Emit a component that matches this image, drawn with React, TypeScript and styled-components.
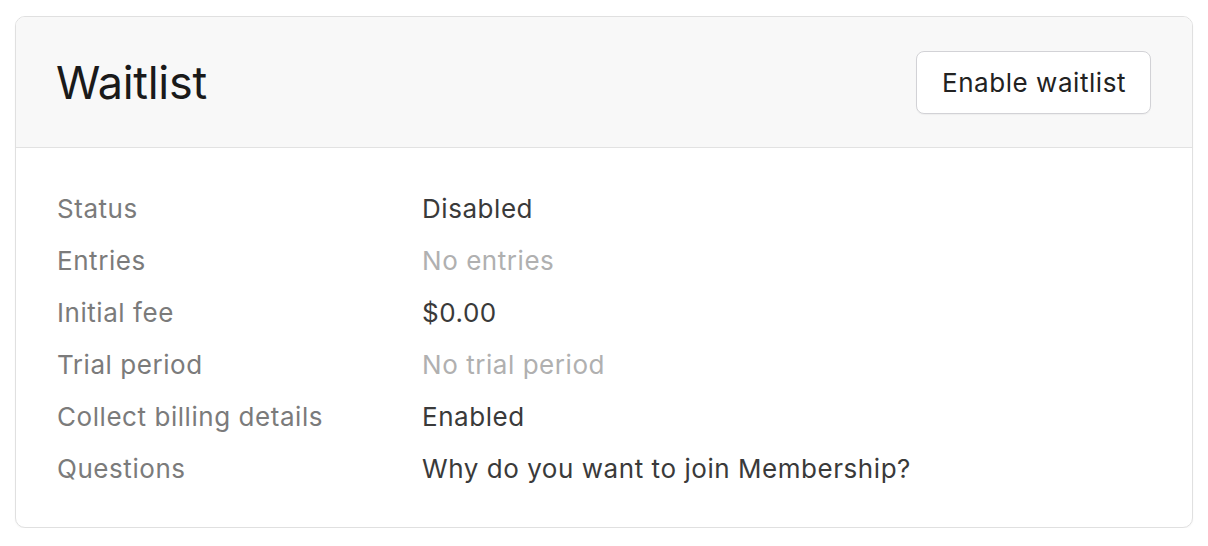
import React from "react";
import styled, { createGlobalStyle } from "styled-components";

const GlobalStyle = createGlobalStyle`
  html, body {
    margin: 0;
    padding: 0;
    background: #ffffff;
    font-family: Inter, "Noto Sans", "Liberation Sans", sans-serif;
  }
`;

const Page = styled.div`
  padding: 16px 15px 0 15px;
`;

const Card = styled.section`
  border: 1px solid #e0e0e0;
  border-radius: 10px;
  overflow: hidden;
  box-shadow: 0 1px 2px rgba(0, 0, 0, 0.04);
  background: #ffffff;
`;

const CardHeader = styled.header`
  display: flex;
  align-items: center;
  justify-content: space-between;
  height: 130px;
  padding: 0 41px 0 40px;
  background: #f8f8f8;
  border-bottom: 1px solid #e2e2e2;
`;

const Title = styled.h2`
  margin: 0;
  font-size: 45px;
  font-weight: 400;
  color: #1a1a1a;
  letter-spacing: -0.3px;
`;

const Button = styled.button`
  height: 63px;
  padding: 0 24px 0 25px;
  border: 1px solid #d2d2d6;
  border-radius: 8px;
  background: #ffffff;
  font-family: inherit;
  font-size: 26px;
  letter-spacing: 0.55px;
  color: #222222;
  box-shadow: 0 1px 1px rgba(0, 0, 0, 0.04);
  cursor: pointer;
`;

const Details = styled.dl`
  display: grid;
  grid-template-columns: 365px 1fr;
  grid-auto-rows: 52px;
  align-items: center;
  margin: 0;
  padding: 34px 41px 33px 41px;
  font-size: 26px;
  letter-spacing: 0.55px;
`;

const Label = styled.dt`
  color: #7b7b7b;
`;

const Value = styled.dd<{ muted?: boolean }>`
  margin: 0;
  color: ${(props) => (props.muted ? "#b0b0b0" : "#3a3a3a")};
`;

const rows: { label: string; value: string; muted?: boolean }[] = [
  { label: "Status", value: "Disabled" },
  { label: "Entries", value: "No entries", muted: true },
  { label: "Initial fee", value: "$0.00" },
  { label: "Trial period", value: "No trial period", muted: true },
  { label: "Collect billing details", value: "Enabled" },
  { label: "Questions", value: "Why do you want to join Membership?" },
];

export default function App() {
  return (
    <Page>
      <GlobalStyle />
      <Card>
        <CardHeader>
          <Title>Waitlist</Title>
          <Button>Enable waitlist</Button>
        </CardHeader>
        <Details>
          {rows.map((row) => (
            <React.Fragment key={row.label}>
              <Label>{row.label}</Label>
              <Value muted={row.muted}>{row.value}</Value>
            </React.Fragment>
          ))}
        </Details>
      </Card>
    </Page>
  );
}
